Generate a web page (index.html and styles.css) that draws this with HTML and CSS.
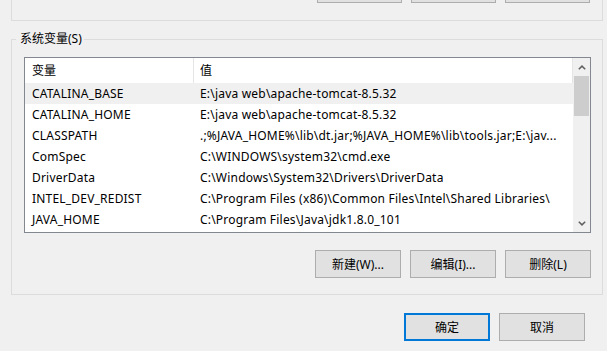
FILE: index.html
```html
<!DOCTYPE html>
<html lang="zh-CN">
<head>
    <meta charset="UTF-8">
    <meta name="viewport" content="width=device-width, initial-scale=1.0">
    <title>环境变量</title>
    <link rel="stylesheet" href="styles.css">
</head>
<body>
    <!-- User variables group (scrolled mostly out of view, only the button edges show) -->
    <div class="top-group">
        <div class="button-row">
            <button class="btn" aria-label="新建"></button>
            <button class="btn" aria-label="编辑"></button>
            <button class="btn" aria-label="删除"></button>
        </div>
    </div>

    <!-- System variables -->
    <fieldset class="group">
        <legend>系统变量(S)</legend>

        <div class="list">
            <div class="list-body">
                <div class="list-row list-head">
                    <div class="cell">变量</div>
                    <div class="cell">值</div>
                </div>
                <div class="list-row selected">
                    <div class="cell">CATALINA_BASE</div>
                    <div class="cell">E:\java web\apache-tomcat-8.5.32</div>
                </div>
                <div class="list-row">
                    <div class="cell">CATALINA_HOME</div>
                    <div class="cell">E:\java web\apache-tomcat-8.5.32</div>
                </div>
                <div class="list-row">
                    <div class="cell">CLASSPATH</div>
                    <div class="cell">.;%JAVA_HOME%\lib\dt.jar;%JAVA_HOME%\lib\tools.jar;E:\jav...</div>
                </div>
                <div class="list-row">
                    <div class="cell">ComSpec</div>
                    <div class="cell">C:\WINDOWS\system32\cmd.exe</div>
                </div>
                <div class="list-row">
                    <div class="cell">DriverData</div>
                    <div class="cell">C:\Windows\System32\Drivers\DriverData</div>
                </div>
                <div class="list-row">
                    <div class="cell">INTEL_DEV_REDIST</div>
                    <div class="cell">C:\Program Files (x86)\Common Files\Intel\Shared Libraries\</div>
                </div>
                <div class="list-row">
                    <div class="cell">JAVA_HOME</div>
                    <div class="cell">C:\Program Files\Java\jdk1.8.0_101</div>
                </div>
            </div>

            <div class="scrollbar">
                <div class="arrow">
                    <svg width="8" height="5" viewBox="0 0 8 5"><path d="M0.8 4.3 L4 1.1 L7.2 4.3" fill="none" stroke="#606060" stroke-width="1.5"/></svg>
                </div>
                <div class="thumb"></div>
                <div class="track"></div>
                <div class="arrow">
                    <svg width="8" height="5" viewBox="0 0 8 5"><path d="M0.8 0.7 L4 3.9 L7.2 0.7" fill="none" stroke="#606060" stroke-width="1.5"/></svg>
                </div>
            </div>
        </div>

        <div class="button-row group-buttons">
            <button class="btn wide">新建(W)...</button>
            <button class="btn wide">编辑(I)...</button>
            <button class="btn wide">删除(L)</button>
        </div>
    </fieldset>

    <!-- Dialog buttons -->
    <div class="dialog-buttons">
        <button class="btn wide default">确定</button>
        <button class="btn wide">取消</button>
    </div>
</body>
</html>
```

FILE: styles.css
```css
/* General styles */
body {
    margin: 0;
    background-color: #f0f0f0;
    font-family: "Noto Sans", "Noto Sans CJK SC", sans-serif;
    font-size: 12px;
    color: #000;
}

/* Buttons */
.button-row {
    display: flex;
    justify-content: flex-end;
    gap: 9px;
}

.btn {
    width: 85px;
    height: 28px;
    padding: 0;
    border: 1px solid #adadad;
    background-color: #e1e1e1;
    font-family: inherit;
    font-size: 12px;
    color: #000;
}

.btn.wide {
    width: 86px;
}

.btn.default {
    border: 2px solid #0078d7;
}

/* User variables group, cut off at the top */
.top-group {
    box-sizing: border-box;
    height: 46px;
    margin: -25px 4px 0 11px;
    padding-right: 12px;
    border: 1px solid #dcdcdc;
    border-top: none;
}

/* System variables group */
.group {
    min-width: 0;
    margin: 10px 4px 0 11px;
    padding: 0 11px 16px 4px;
    border: 1px solid #dcdcdc;
}

.group legend {
    padding: 0 2px 0 4px;
    line-height: 16px;
}

/* Variable list */
.list {
    box-sizing: border-box;
    display: flex;
    height: 176px;
    margin: 10px 0 0 8px;
    border: 1px solid #828790;
    background-color: #fff;
    overflow: hidden;
}

.list-body {
    flex: 1;
    min-width: 0;
}

.list-row {
    display: grid;
    grid-template-columns: 169px 1fr;
    height: 21px;
    line-height: 21px;
}

.list-row .cell {
    padding-left: 7px;
    letter-spacing: 0.2px;
    white-space: nowrap;
    overflow: hidden;
}

.list-row .cell + .cell {
    padding-left: 6px;
}

.list-head {
    height: 25px;
    line-height: 25px;
}

.list-head .cell {
    letter-spacing: 0;
    border-right: 1px solid #e5e5e5;
}

.list-row.selected {
    background-color: #f0f0f0;
}

/* Scrollbar */
.scrollbar {
    display: flex;
    flex-direction: column;
    width: 17px;
    background-color: #f0f0f0;
}

.scrollbar .arrow {
    display: flex;
    align-items: center;
    justify-content: center;
    height: 17px;
    padding-top: 2px;
    box-sizing: border-box;
}

.scrollbar .arrow:last-child {
    padding-top: 0;
}

.scrollbar .thumb {
    height: 40px;
    margin: 1px 1px 0;
    background-color: #cdcdcd;
}

.scrollbar .track {
    flex: 1;
}

.group-buttons {
    margin-top: 17px;
}

/* OK / Cancel */
.dialog-buttons {
    display: flex;
    justify-content: flex-end;
    gap: 9px;
    margin-top: 18px;
    padding-right: 22px;
}
```
